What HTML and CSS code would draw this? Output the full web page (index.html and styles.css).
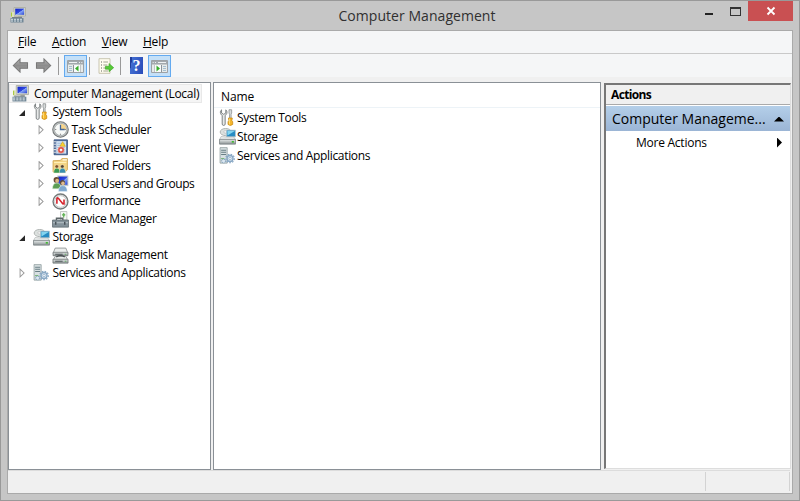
FILE: index.html
```html
<!DOCTYPE html>
<html lang="en">
<head>
<meta charset="utf-8">
<title>Computer Management</title>
<link rel="stylesheet" href="styles.css">
</head>
<body>
<svg class="defs" width="0" height="0" aria-hidden="true">
  <defs>
    <linearGradient id="blue" x1="0" y1="0" x2="1" y2="1"><stop offset="0" stop-color="#1022c8"/><stop offset=".5" stop-color="#3048e0"/><stop offset=".55" stop-color="#88a8f4"/><stop offset="1" stop-color="#2740d4"/></linearGradient>
    <linearGradient id="metal" x1="0" y1="0" x2="0" y2="1"><stop offset="0" stop-color="#e8ecec"/><stop offset="1" stop-color="#8b9293"/></linearGradient>
    <linearGradient id="arrow" x1="0" y1="0" x2="0" y2="1"><stop offset="0" stop-color="#b5b5b5"/><stop offset=".5" stop-color="#8d8d8d"/><stop offset="1" stop-color="#a5a5a5"/></linearGradient>
  </defs>
  <symbol id="computer" viewBox="0 0 16 16">
    <path d="M4 .5h11.5v8.5H4z" fill="#d9dccd" stroke="#a8aa9d" stroke-width=".8"/>
    <path d="M5.2 1.6h9v6.2h-9z" fill="url(#blue)"/>
    <path d="M1 5h3v5H1z" fill="#dce2ba"/><path d="M1.5 5.5v4" stroke="#a8c93e"/>
    <path d="M8 9h4v2H8z" fill="#a9aca5"/><path d="M2 10h10v1H2z" fill="#778087"/>
    <path d="M.5 11h13v4.5H.5z" fill="#718796"/><path d="M1 12.3h11.5M1 14h11.5" stroke="#e7edf0" stroke-width=".9" stroke-dasharray="2 1"/>
  </symbol>
  <symbol id="tools" viewBox="0 0 16 16">
    <path d="M2.4.8C.7 2 1 5 3 6v8.2c0 1.7 2.8 1.7 2.8 0V6c2-1 2.3-4 .6-5.2v3L4.4 5l-2-1.2z" fill="#e7e9e9" stroke="#7a7f80" stroke-width=".9"/>
    <path d="M9.4 .7h2.5v3L11.4 5v4H9.9V5L9.4 3.7z" fill="#d8dcdc" stroke="#858a8b" stroke-width=".7"/>
    <path d="M8.9 8.5h3.6L12.1 11l.8 1v2.5q-2.2 2-4.4 0V12l.8-1z" fill="#f5b62c" stroke="#c9860c" stroke-width=".7"/><path d="M9.9 9v5.5" stroke="#ffe27f" stroke-width=".8"/>
  </symbol>
  <symbol id="clock" viewBox="0 0 16 16">
    <circle cx="8" cy="8" r="7.3" fill="#c4c7c7" stroke="#747878" stroke-width="1"/><circle cx="8" cy="8" r="5.7" fill="#f8faf8" stroke="#9aa0a1" stroke-width=".7"/>
    <path d="M8 8V2.5A5.4 5.4 0 0 1 13.5 8z" fill="#f7d48a"/><path d="M8 3.5V8h4" fill="none" stroke="#446798" stroke-width="1.2"/><path d="M3 8h1M8 12v1M12 8h1" stroke="#777"/>
  </symbol>
  <symbol id="events" viewBox="0 0 16 16">
    <path d="M2 .8h12.5v14H2z" fill="#5876a4" stroke="#344f7d" stroke-width=".8"/><path d="M4 2h9.3v11.7H4z" fill="#d5e4f5"/>
    <path d="M5 4h7M5 6h7M5 8h7M5 10h7M5 12h7" stroke="#91afd2" stroke-width=".7"/><path d="M1 2.5h3M1 5h3M1 7.5h3M1 10h3M1 12.5h3" stroke="#d9dcdf" stroke-width="1"/>
    <path d="m10 2.5 2.6 4.4H7.4z" fill="#f9d132" stroke="#c89b0e" stroke-width=".5"/><circle cx="8.5" cy="10.3" r="3" fill="#dc4338" stroke="#f7c3b5" stroke-width=".5"/><path d="m7.4 9.2 2.2 2.2m0-2.2-2.2 2.2" stroke="white"/>
  </symbol>
  <symbol id="shared" viewBox="0 0 16 16">
    <path d="M1 3.5V14h11.5l2-2V1.5H9.3L8 3.2z" fill="#f3d384" stroke="#d0a44e" stroke-width=".8"/><path d="M2 5.2h11.5" stroke="#fff0b8"/><path d="M10 2.7h4" stroke="#fff" stroke-width="1"/>
    <g stroke="#fff3cf" stroke-width=".4"><circle cx="4.5" cy="9" r="1.7" fill="#7d5129"/><path d="M1.6 15q0-4.5 3-4.5t3 4.5z" fill="#3b9a54"/><circle cx="9.7" cy="9" r="1.7" fill="#55422e"/><path d="M6.9 15q0-4.5 3-4.5t3 4.5z" fill="#398fae"/></g>
  </symbol>
  <symbol id="users" viewBox="0 0 16 16">
    <path d="M5 .5h10.4v10H5z" fill="#bfc7c9"/><path d="M6 1.5h8.5v7.7H6z" fill="url(#blue)"/>
    <circle cx="4.2" cy="4.6" r="2.7" fill="#664b35"/><circle cx="4.8" cy="5.4" r="1.8" fill="#deb684"/><path d="M.5 13q0-5.4 4.1-5.4T8.3 13z" fill="#5c9c54" stroke="#dceed8" stroke-width=".5"/>
    <circle cx="9.9" cy="7.2" r="2.4" fill="#5d4b3c"/><circle cx="10.3" cy="7.9" r="1.7" fill="#dfbc8f"/><path d="M6.1 15.5q0-5.5 4.1-5.5t4.1 5.5z" fill="#80a9cf" stroke="#e7f1fa" stroke-width=".5"/>
  </symbol>
  <symbol id="performance" viewBox="0 0 16 16">
    <circle cx="8" cy="8" r="7" fill="#f6f7f7" stroke="#747a7a" stroke-width="1.3"/><circle cx="8" cy="8" r="5.5" fill="#fff" stroke="#b7baba" stroke-width=".8"/>
    <path d="M4.6 10V5.5Q4.6 4 6 5l4.5 5.5M11.3 11V6" fill="none" stroke="#d5232c" stroke-width="1.5"/>
  </symbol>
  <symbol id="device" viewBox="0 0 16 16">
    <path d="M8 .5h6v8H8z" fill="#f6f8f5" stroke="#afb5b2" stroke-width=".7"/><path d="M11 6V3M9.6 4.2 11 2.5l1.4 1.7" fill="none" stroke="#65b459" stroke-width="1.2"/>
    <path d="M4.2 9V6.8h6V9" fill="none" stroke="#5e6669" stroke-width="1.3"/><path d="M.5 8.5h15v6.7H.5z" fill="#84929a" stroke="#586369" stroke-width=".7"/><path d="M1 11h14" stroke="#b3bfc5"/><path d="M3.5 10v3M12 10v3" stroke="#49535a" stroke-width="1.4"/>
  </symbol>
  <symbol id="storage" viewBox="0 0 16 16">
    <ellipse cx="6.3" cy="3.8" rx="5.2" ry="3.4" fill="#dce1df" stroke="#9ba09f" stroke-width=".7"/><ellipse cx="6" cy="3.7" rx="1.7" ry="1" fill="#fff" stroke="#aaa" stroke-width=".5"/>
    <path d="M7 2h8.5v6.3H7z" fill="#278bc2" stroke="#b8c8ce" stroke-width=".7"/><path d="M7.8 2.8h7L8 7z" fill="#83d4ef"/>
    <path d="m2 8-1.5 3h15L14 8.5H7z" fill="#edf0ef" stroke="#a0a5a5" stroke-width=".5"/><path d="M.5 10.7h15v4.5H.5z" fill="url(#metal)" stroke="#737b7d" stroke-width=".7"/><path d="M12 13h2" stroke="#42b832" stroke-width="1.6"/>
  </symbol>
  <symbol id="disk" viewBox="0 0 16 16">
    <path d="m3 1-2 5h14l-2-5z" fill="#ebeeed" stroke="#7d8384" stroke-width=".7"/>
    <path d="M1 5h14v3.2H1z" fill="url(#metal)" stroke="#6b7172" stroke-width=".7"/>
    <path d="M3 8.8h10l1.7 3H1.3z" fill="#ebeeed" stroke="#7d8384" stroke-width=".7"/><path d="M.9 11.5h14.2v3.7H.9z" fill="url(#metal)" stroke="#6b7172" stroke-width=".7"/><path d="M4 9.5q4-2.6 8 0" fill="none" stroke="#474d4f" stroke-width="1.1"/><path d="M3 6.8h7M3 13.4h7" stroke="#50585b" stroke-width="1"/><path d="M12 6.8h1.4M12 13.4h1.5" stroke="#68ae69"/>
  </symbol>
  <symbol id="services" viewBox="0 0 16 16">
    <path d="M1 .6h6.7v14.6H1z" fill="#d8e0e2" stroke="#899799" stroke-width=".7"/><path d="M2 3h4.7M2 5h4.7M2 7h4.7" stroke="#687e85"/><path d="M2 11h3" stroke="#64ae5e"/>
    <g fill="none" stroke="#8aa9c5"><circle cx="10.4" cy="10.8" r="2.8" fill="#dce8f2" stroke-width="1.3"/><circle cx="10.4" cy="10.8" r="4" stroke-width="1.2" stroke-dasharray="1.5 1.2"/><circle cx="10.4" cy="10.8" r="1.1" fill="#fff" stroke-width=".7"/></g>
    <circle cx="4.3" cy="13.2" r="1.8" fill="#dce8f2" stroke="#88a5bd" stroke-dasharray="1 .6"/>
  </symbol>
  <symbol id="back" viewBox="0 0 17 16"><path d="M.8 8 8 1v4h8v6H8v4z" fill="url(#arrow)" stroke="#777" stroke-width="1.1"/></symbol>
  <symbol id="panel" viewBox="0 0 17 16">
    <path d="M.5 2.5h16v12H.5z" fill="#e8ebea" stroke="#9da2a6"/><path d="M1 3h15v3.5H1z" fill="#a3a9ad"/><path d="M2 4.5h8M12 4.5h1M14.3 4.5h1" stroke="#eef1f2"/><path d="M6.5 7v7" stroke="#8a9399"/><path d="M2 8.5h3M2 10.5h3M2 12.5h3" stroke="#a5bfd0"/><path d="M7 7h6v7H7z" fill="#fafbfa"/><path d="M13.5 7v7" stroke="#c0c5c7"/><path d="M8 10.5 11.5 7.4v6.2z" fill="#37ae2b"/>
  </symbol>
  <symbol id="export" viewBox="0 0 16 16">
    <path d="M1 .7h11v14.6H1z" fill="#fffdf0" stroke="#bdb9a0" stroke-width=".8"/><path d="M3 4h1M3 7h1M3 10h1M3 13h1" stroke="#62655d"/><path d="M5.3 4H10M5.3 7h4M5.3 10h3M5.3 13H10" stroke="#a2a492"/><path d="M7.4 8.3H11V5.5l4.7 4.2-4.7 4v-2.5H7.4z" fill="#57ca38" stroke="#38a124" stroke-width=".6"/>
  </symbol>
</svg>
<div class="window">
  <header class="titlebar">
    <svg class="title-icon"><use href="#computer"/></svg>
    <h1><span>Computer Management</span></h1>
    <div class="controls"><i class="minimize"></i><i class="maximize"></i><button class="close" aria-label="Close"><svg viewBox="0 0 10 10"><path d="m1.5 1.5 7 7m0-7-7 7" stroke="#fff" stroke-width="1.8"/></svg></button></div>
  </header>
  <main class="client">
    <nav class="menu"><span><u>F</u>ile</span><span><u>A</u>ction</span><span><u>V</u>iew</span><span><u>H</u>elp</span></nav>
    <div class="toolbar">
      <svg class="nav-arrow"><use href="#back"/></svg><svg class="nav-arrow forward"><use href="#back"/></svg><i class="sep first"></i>
      <span class="tool"><svg><use href="#panel"/></svg></span><i class="sep"></i>
      <svg class="export"><use href="#export"/></svg><i class="sep after"></i><span class="help">?</span>
      <span class="tool right"><svg><use href="#panel"/></svg></span>
    </div>
    <div class="workspace">
      <section class="tree">
        <div class="row root"><svg><use href="#computer"/></svg><span>Computer Management (Local)</span></div>
        <div class="row level1"><i class="open"></i><svg><use href="#tools"/></svg><span>System Tools</span></div>
        <div class="row level2"><i class="shut"></i><svg><use href="#clock"/></svg><span>Task Scheduler</span></div>
        <div class="row level2"><i class="shut"></i><svg><use href="#events"/></svg><span>Event Viewer</span></div>
        <div class="row level2"><i class="shut"></i><svg><use href="#shared"/></svg><span>Shared Folders</span></div>
        <div class="row level2"><i class="shut"></i><svg><use href="#users"/></svg><span class="long">Local Users and Groups</span></div>
        <div class="row level2"><i class="shut"></i><svg><use href="#performance"/></svg><span>Performance</span></div>
        <div class="row level2"><i></i><svg><use href="#device"/></svg><span>Device Manager</span></div>
        <div class="row level1"><i class="open"></i><svg><use href="#storage"/></svg><span>Storage</span></div>
        <div class="row level2"><i></i><svg><use href="#disk"/></svg><span>Disk Management</span></div>
        <div class="row level1"><i class="shut"></i><svg><use href="#services"/></svg><span>Services and Applications</span></div>
      </section>
      <section class="list">
        <div class="list-head">Name</div>
        <div class="item"><svg><use href="#tools"/></svg><span>System Tools</span></div>
        <div class="item"><svg><use href="#storage"/></svg><span>Storage</span></div>
        <div class="item"><svg><use href="#services"/></svg><span>Services and Applications</span></div>
      </section>
      <aside class="actions">
        <div class="actions-head">Actions</div>
        <div class="group"><span>Computer Manageme...</span><i></i></div>
        <div class="more"><span>More Actions</span><i></i></div>
      </aside>
    </div>
    <footer class="status"><i></i><i></i></footer>
  </main>
</div>
</body>
</html>
```
FILE: styles.css
```css
* { box-sizing: border-box; }
body { margin: 0; font: 12px/18px "Open Sans", "Noto Sans", sans-serif; letter-spacing: -.33px; color: #000; overflow: hidden; }
svg { display: block; flex: none; }
.defs { position: absolute; }
.window { width: 800px; height: 501px; display: flex; flex-direction: column; background: #c6c6c6; border: 1px solid #999; padding: 0 6px 6px; }
.titlebar { height: 29px; flex: none; display: flex; align-items: flex-start; }
.title-icon { width: 16px; height: 16px; margin: 6px 0 0 3px; }
h1 { flex: 1; margin: 5px 0 0 109px; text-align: center; font-size: 14px; line-height: 20px; font-weight: 400; color: #303030; letter-spacing: .05px; }
.controls { display: flex; width: 94px; }
.minimize { width: 8px; height: 2px; margin: 12px 17px 0 6px; background: #222; }
.maximize { width: 11px; height: 9px; margin: 6px 7px 0 0; border: 1px solid #333; border-top-width: 2px; }
.close { width: 45px; height: 20px; border: 0; padding: 0; display: grid; place-items: center; background: #c95052; }
.close svg { width: 10px; height: 10px; }
.client { flex: 1; min-height: 0; border: 1px solid #aaa; background: #f0f0f0; display: flex; flex-direction: column; }
.menu { flex: none; height: 23px; display: flex; align-items: center; gap: 15.5px; padding-left: 10px; background: #f5f6f7; border-bottom: 1px solid #c9c9c9; letter-spacing: -.15px; }
.menu u { text-underline-offset: 1px; }
.toolbar { flex: none; height: 23px; display: flex; align-items: center; padding-left: 4px; background: #f5f6f7; }
.nav-arrow { width: 17px; height: 15px; }
.forward { transform: scaleX(-1); margin-left: 6px; }
.sep { width: 1px; height: 18px; background: #999; margin-left: 2px; }
.sep.first { margin-left: 6px; }
.tool { width: 23px; height: 22px; display: grid; place-items: center; background: #c4e0f8; border: 1px solid #63aaf0; margin-left: 5px; }
.tool svg { width: 17px; height: 16px; }
.tool.right { margin-left: 5px; }
.tool.right svg { transform: scaleX(-1); }
.export { width: 16px; height: 16px; margin-left: 8px; }
.sep.after { margin-left: 6px; }
.help { width: 13px; height: 17px; margin-left: 9px; background: linear-gradient(100deg, #203e9c 15%, #416dd1 16%, #294bb8); color: #fff; text-align: center; font: bold 16px/17px "Liberation Serif", serif; letter-spacing: 0; }
.workspace { height: 388px; flex: none; display: flex; margin-top: 5px; padding-right: 1px; }
.tree { width: 203px; background: #fff; border: 1px solid #8a9096; padding-top: 1px; }
.row { height: 17.9px; display: flex; align-items: center; white-space: nowrap; }
.row svg { width: 17px; height: 17px; margin-right: 3px; }
.row > i { width: 8px; height: 8px; margin-right: 9.5px; }
.root { width: 193px; height: 19px; padding-left: 3px; letter-spacing: -.29px; background: #f5f5f5; outline: 1px solid #e8e8e8; outline-offset: -1px; }
.root svg { margin-right: 5px; }
.level1 { padding-left: 9px; }
.level1 svg, .level2 svg { margin-left: -3px; }
.level2 { padding-left: 28px; }
.row .open { width: 6px; height: 6px; margin: 2px 10.5px 0 1px; background: #282828; clip-path: polygon(100% 0, 100% 100%, 0 100%); }
.row .shut { height: 10px; background: #999; clip-path: polygon(evenodd, 20% 0, 85% 50%, 20% 100%, 20% 0, 32% 23%, 32% 77%, 68% 50%, 32% 23%); }
.long { letter-spacing: -.45px; }
.list { width: 388px; margin-left: 2px; background: #fff; border: 1px solid #8a9096; }
.list-head { height: 25px; padding: 5px 0 0 7px; border-bottom: 1px solid #edf3f7; letter-spacing: -.1px; }
.item { height: 19px; display: flex; align-items: center; padding-left: 5px; }
.item svg { width: 17px; height: 17px; margin-right: 1px; }
.actions { flex: 1; height: 386px; margin: 1px 0 0 3px; background: #fff; border: solid; border-width: 2px 1px 1px 2px; border-color: #777 #ddd #ddd #777; }
.actions-head { height: 20px; padding: 1px 0 0 5px; font-weight: 700; letter-spacing: -.65px; background: #f0f0f0; border-bottom: 1px solid #aaa; }
.group { height: 25px; margin-top: 1px; padding: 1px 6px 0; display: flex; align-items: center; justify-content: space-between; background: linear-gradient(#b4cfe9, #9bb5d5); font-size: 14px; letter-spacing: 0; }
.group i { width: 10px; height: 5px; background: #000; clip-path: polygon(50% 0, 100% 100%, 0 100%); }
.more { height: 23px; display: flex; align-items: center; justify-content: space-between; padding: 0 8px 0 30px; letter-spacing: -.25px; }
.more i { width: 5px; height: 10px; background: #000; clip-path: polygon(0 0, 100% 50%, 0 100%); }
.status { flex: 1; margin: 0 2px 0 0; display: flex; justify-content: flex-end; padding-top: 1px; border-top: 1px solid #dcdcdc; }
.status i { width: 1px; height: 19px; background: #d3d3d3; }
.status i + i { margin-left: 83px; }
```
